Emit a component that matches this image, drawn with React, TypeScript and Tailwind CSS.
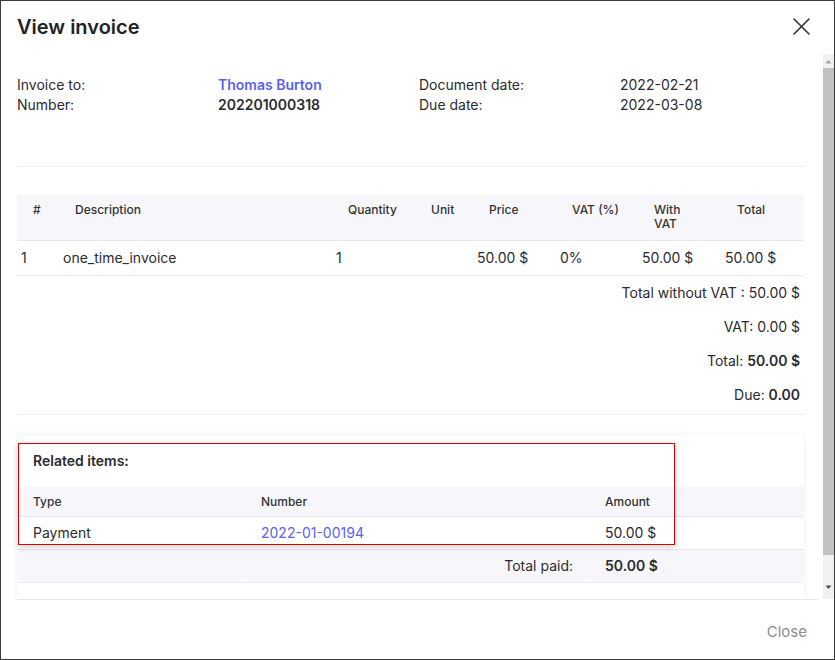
import React from "react";

const items = [
  { n: "1", desc: "one_time_invoice", qty: "1", unit: "", price: "50.00 $", vat: "0%", withVat: "50.00 $", total: "50.00 $" },
];

const cols = "grid grid-cols-[42px_273px_83px_58px_83px_82px_83px_82px]";
const relCols = "grid grid-cols-[228px_344px_1fr]";

export default function App() {
  return (
    <div
      className="relative w-[835px] h-[660px] border border-[#3b3b3b] bg-white flex flex-col text-[#2b2b2f] overflow-hidden"
      style={{ fontFamily: "Inter, 'Noto Sans', sans-serif" }}
    >
      {/* Header */}
      <div className="h-[53px] flex items-start justify-between pl-4 pr-[24px] pt-[13px] shrink-0">
        <h1 className="text-[20px] leading-[26px] font-semibold text-[#232327]">View invoice</h1>
        <button className="mt-[4px] text-[#333]">
          <svg width="17" height="17" viewBox="0 0 17 17" fill="none" stroke="currentColor" strokeWidth="1.6" strokeLinecap="round">
            <path d="M1 1L16 16M16 1L1 16" />
          </svg>
        </button>
      </div>

      {/* Body */}
      <div className="flex h-[545px] shrink-0">
        <div className="flex-1 overflow-hidden pl-4 pr-[19px]">
          {/* Info */}
          <div className="grid grid-cols-[201px_201px_201px_1fr] pt-[21px] pb-[51px] border-b border-[#ececf0] text-[14px] leading-5">
            <div>Invoice to:</div>
            <div className="font-semibold text-[#5a62ee]">Thomas Burton</div>
            <div>Document date:</div>
            <div>2022-02-21</div>
            <div>Number:</div>
            <div className="font-semibold">202201000318</div>
            <div>Due date:</div>
            <div>2022-03-08</div>
          </div>

          {/* Items table */}
          <div className="mt-[28px]">
            <div className={`${cols} bg-[#f7f7fb] border-b border-[#e8e8ee] text-[12px] leading-[14px] font-medium text-[#333]`}>
              {["#", "Description", "Quantity", "Unit", "Price", "VAT (%)", "With VAT", "Total"].map((h) => (
                <div key={h} className="px-4 pt-2 pb-[9px]">{h}</div>
              ))}
            </div>
            {items.map((it) => (
              <div key={it.n} className={`${cols} border-b border-[#e8e8ee] text-[14px] leading-5`}>
                <div className="px-1 py-[7px]">{it.n}</div>
                <div className="px-1 py-[7px]">{it.desc}</div>
                <div className="px-1 py-[7px]">{it.qty}</div>
                <div className="px-1 py-[7px]">{it.unit}</div>
                <div className="px-1 py-[7px]">{it.price}</div>
                <div className="px-1 py-[7px]">{it.vat}</div>
                <div className="px-1 py-[7px]">{it.withVat}</div>
                <div className="px-1 py-[7px]">{it.total}</div>
              </div>
            ))}
          </div>

          {/* Totals */}
          <div className="flex flex-col items-end pr-1 pb-[3px] border-b border-[#ececf0] text-[14px]">
            <div className="h-[33px] flex items-center">Total without VAT : 50.00 $</div>
            <div className="h-[34px] flex items-center">VAT: 0.00 $</div>
            <div className="h-[34px] flex items-center">
              Total:&nbsp;<span className="font-semibold">50.00 $</span>
            </div>
            <div className="h-[34px] flex items-center">
              Due:&nbsp;<span className="font-semibold">0.00</span>
            </div>
          </div>

          {/* Related items card */}
          <div className="mt-5 rounded-t-lg bg-white shadow-[0_0_5px_rgba(0,0,0,0.07)] pb-8">
            <div className="pl-4 pt-[16px] pb-4 text-[14px] leading-5 font-semibold">Related items:</div>
            <div className={`${relCols} bg-[#f7f7fb] border-b border-[#e8e8ee] text-[12px] leading-[15px] font-medium text-[#333]`}>
              <div className="px-4 py-[7px]">Type</div>
              <div className="px-4 py-[7px]">Number</div>
              <div className="px-4 py-[7px]">Amount</div>
            </div>
            <div className={`${relCols} border-b border-[#e8e8ee] text-[14px] leading-5`}>
              <div className="px-4 py-[6px]">Payment</div>
              <div className="px-4 py-[6px] text-[#5a62ee]">2022-01-00194</div>
              <div className="px-4 py-[6px]">50.00 $</div>
            </div>
            <div className={`${relCols} border-b border-[#e8e8ee] text-[14px] leading-5`}>
              <div className="bg-[#f7f7fb] rounded-b-md py-[6px]">&nbsp;</div>
              <div className="bg-[#f7f7fb] rounded-b-md px-4 py-[6px] text-right">Total paid:</div>
              <div className="bg-[#f7f7fb] rounded-b-md px-4 py-[6px] font-semibold">50.00 $</div>
            </div>
          </div>
        </div>

        {/* Scrollbar */}
        <div className="w-[11px] bg-[#f1f1f1] flex flex-col items-center">
          <svg width="7" height="14" viewBox="0 0 7 14" className="shrink-0">
            <path d="M0.5 9.5L3.5 6L6.5 9.5Z" fill="#a3a3a3" />
          </svg>
          <div className="w-full h-[487px] bg-[#c1c1c1]" />
          <div className="flex-1" />
          <svg width="7" height="14" viewBox="0 0 7 14" className="shrink-0 mb-[4px]">
            <path d="M0.5 4.5L3.5 8L6.5 4.5Z" fill="#505050" />
          </svg>
        </div>
      </div>
      <div className="ml-4 mr-4 h-px bg-[#e8e8ec] shrink-0" />

      {/* Footer */}
      <div className="flex-1 flex items-center justify-end pr-[27px] pt-[6px]">
        <button className="text-[15px] text-[#8a8e96]">Close</button>
      </div>

      {/* Highlight overlay */}
      <div className="absolute left-[17px] top-[442px] w-[657px] h-[102px] border border-[#e00000] shadow-[0_2px_6px_rgba(0,0,0,0.18)] pointer-events-none" />
    </div>
  );
}
